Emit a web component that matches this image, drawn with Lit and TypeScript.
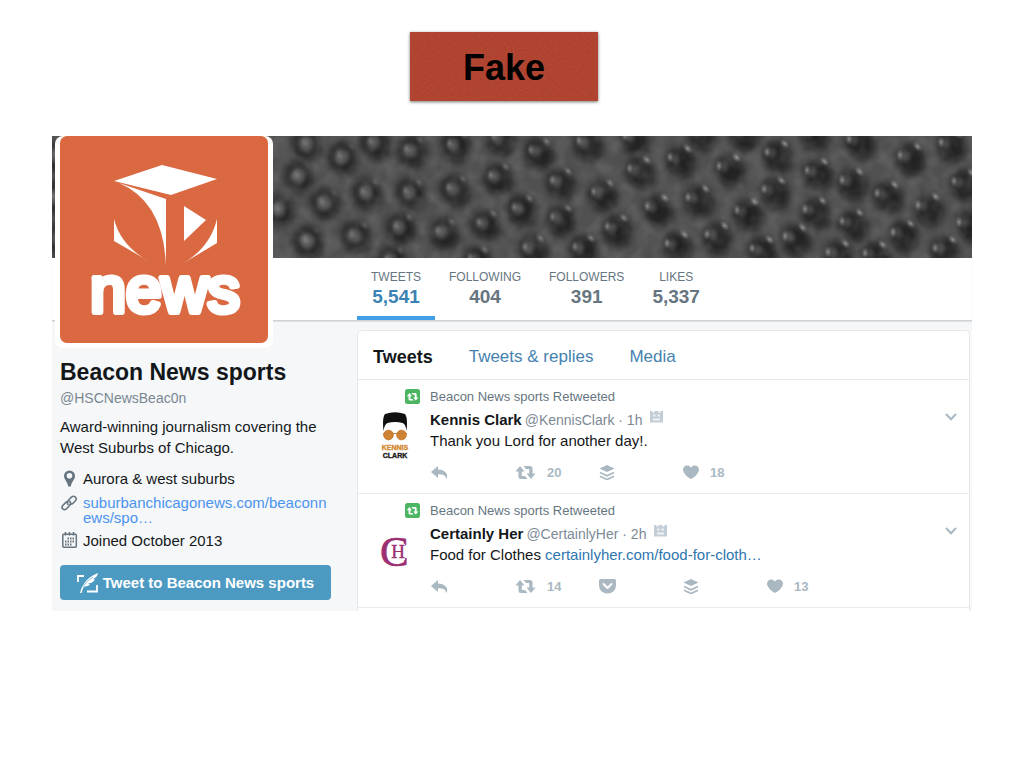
import { LitElement, html, svg, css } from "lit";
import { customElement, property } from "lit/decorators.js";

type ActionKind = "reply" | "retweet" | "pocket" | "buffer" | "like";

interface Tweet {
  by: string;
  name: string;
  handle: string;
  age: string;
  text: string;
  link?: string;
  avatar: "kennis" | "certainly";
  actions: { kind: ActionKind; count?: number }[];
}

const tweets: Tweet[] = [
  {
    by: "Beacon News sports Retweeted",
    name: "Kennis Clark",
    handle: "@KennisClark",
    age: "1h",
    text: "Thank you Lord for another day!.",
    avatar: "kennis",
    actions: [
      { kind: "reply" },
      { kind: "retweet", count: 20 },
      { kind: "buffer" },
      { kind: "like", count: 18 },
    ],
  },
  {
    by: "Beacon News sports Retweeted",
    name: "Certainly Her",
    handle: "@CertainlyHer",
    age: "2h",
    text: "Food for Clothes ",
    link: "certainlyher.com/food-for-cloth…",
    avatar: "certainly",
    actions: [
      { kind: "reply" },
      { kind: "retweet", count: 14 },
      { kind: "pocket" },
      { kind: "buffer" },
      { kind: "like", count: 13 },
    ],
  },
];

const stats = [
  { label: "TWEETS", value: "5,541", active: true },
  { label: "FOLLOWING", value: "404", active: false },
  { label: "FOLLOWERS", value: "391", active: false },
  { label: "LIKES", value: "5,337", active: false },
];

// Studs of the rubber texture: centre x, centre y.
const studs: [number, number][] = [
  [255, 9], [291, 22], [323, 8], [360, 16], [404, 11], [449, 4], [487, 18], [536, 9],
  [247, 41], [273, 68], [315, 58], [359, 58], [403, 55], [446, 43], [509, 48], [551, 60],
  [227, 74], [256, 106], [304, 101], [349, 93], [392, 98], [434, 90], [470, 75], [509, 85],
  [565, 95], [481, 115], [532, 115], [583, 4], [588, 37], [629, 26], [650, 0], [678, 35],
  [693, 0], [726, 21], [763, 0], [766, 39], [808, 8], [801, 49], [859, 24], [900, 11],
  [913, 50], [606, 75], [647, 66], [696, 79], [723, 58], [764, 78], [801, 90], [836, 62],
  [877, 74], [918, 91], [626, 112], [666, 103], [711, 117], [744, 105],
  [787, 121], [852, 101], [894, 117], [824, 122], [6, 20], [3, 62], [8, 104], [340, 126], [425, 126],
];

const retweetPath =
  "M5 1 0.5 6.5H3.5V11.5Q3.5 14 6 14H12.5L10 11H6.8V6.5H9.5ZM16 14 20.5 8.500H17.500V3.500Q17.500 1 15 1H8.500L11 4H14.200V8.500H11.500Z";

const actionIcons = {
  reply: { label: "Reply", w: 17, art: svg`<path d="M7 1 0 7 7 13V9.300C11.500 9 14.500 10.300 15.500 14 17.800 9 14 4.700 7 4.600Z"/>` },
  retweet: { label: "Retweet", w: 21, art: svg`<path d=${retweetPath}/>` },
  pocket: {
    label: "Pocket",
    w: 17,
    art: svg`<path d="M1.500 0H15.500Q17 0 17 1.500V6.500A8.500 8 0 0 1 0 6.500V1.500Q0 0 1.500 0Z"/><path d="M4.500 5 8.500 9 12.500 5" fill="none" stroke="#fff" stroke-width="2" stroke-linecap="round" stroke-linejoin="round"/>`,
  },
  buffer: {
    label: "Buffer",
    w: 16,
    art: svg`<path d="M8 0 15.500 3.500 8 7 0.500 3.500Z"/><path d="M1 7.500 8 10.700 15 7.500M1 11.300 8 14.500 15 11.300" fill="none" stroke="currentColor" stroke-width="1.700"/>`,
  },
  like: { label: "Like", w: 16, art: svg`<path d="M8 14C5 12.500 0 8.500 0 4.500 0 .4 5.500-1.200 8 2.500 10.500-1.200 16 .4 16 4.500 16 8.500 11 12.500 8 14Z"/>` },
};

@customElement("rubber-banner")
export class RubberBanner extends LitElement {
  static styles = css`
    :host { display: block; background: #474747; }
    .art { display: block; width: 100%; height: 122px; }
  `;
  render() {
    return html`
      <svg class="art" viewBox="0 0 920 122" preserveAspectRatio="xMidYMid slice" aria-hidden="true">
        <defs>
          <radialGradient id="pit">
            <stop offset="0" stop-color="#202020"/>
            <stop offset=".4" stop-color="#252525"/>
            <stop offset=".65" stop-color="#333" stop-opacity=".85"/>
            <stop offset="1" stop-color="#484848" stop-opacity="0"/>
          </radialGradient>
          <radialGradient id="core">
            <stop offset="0" stop-color="#747474"/>
            <stop offset=".5" stop-color="#5c5c5c" stop-opacity=".8"/>
            <stop offset="1" stop-color="#444" stop-opacity="0"/>
          </radialGradient>
          <radialGradient id="glint">
            <stop offset="0" stop-color="#ccc"/>
            <stop offset="1" stop-color="#888" stop-opacity="0"/>
          </radialGradient>
          <filter id="grain" x="0" y="0" width="100%" height="100%">
            <feTurbulence type="fractalNoise" baseFrequency=".07" numOctaves="2" seed="4"/>
            <feColorMatrix values="0 0 0 0 .5  0 0 0 0 .5  0 0 0 0 .5  .9 0 0 0 -.32"/>
          </filter>
        </defs>
        <rect width="920" height="122" fill="#505050"/>
        ${studs.map(
          ([x, y]) => svg`<ellipse cx=${x} cy=${y} rx="21" ry="24" fill="url(#pit)" transform="rotate(-30 ${x} ${y})"/>`,
        )}
        ${studs.map(([x, y]) => {
          const t = Math.min(1, Math.max(0, (x - 240) / 380));
          return svg`
            <ellipse cx=${x - 1 - 5 * t} cy=${y - 1 - 3 * t} rx=${11 - 4 * t} ry=${12 - 4 * t} fill="url(#core)" opacity=${0.95 - 0.5 * t}/>
            <ellipse cx=${x - 3 - 8 * t} cy=${y - 3 - 2 * t} rx="4" ry="6" fill="url(#glint)" opacity=${0.15 + 0.4 * t}/>
            <ellipse cx=${x + 9 - 3 * t} cy=${y - 12} rx="6" ry="4" fill="url(#glint)" transform="rotate(45 ${x + 8} ${y - 12})" opacity=${0.1 + 0.5 * t}/>`;
        })}
        <rect width="920" height="122" filter="url(#grain)" opacity=".35"/>
      </svg>
    `;
  }
}

@customElement("tweet-item")
export class TweetItem extends LitElement {
  @property({ attribute: false }) tweet!: Tweet;

  static styles = css`
    :host { display: block; border-bottom: 1px solid #e6ecf0; }
    a { color: inherit; text-decoration: none; }
    button { border: 0; padding: 0; background: none; font: inherit; color: inherit; cursor: pointer; }
    .tweet { display: grid; grid-template-columns: 48px minmax(0, 1fr); column-gap: 11px; padding: 9px 12px 11px 13px; }
    .context { grid-column: 1 / -1; display: flex; align-items: center; gap: 9px; height: 16px; padding-left: 34px; font-size: 13px; line-height: 16px; color: #66757f; }
    .badge { width: 16px; height: 16px; }
    .avatar { width: 48px; height: 50px; margin-top: 6px; }
    .body { padding-top: 4px; }
    .head { display: flex; align-items: center; height: 21px; font-size: 14px; color: #7c8a95; white-space: nowrap; }
    .name { font-size: 15px; font-weight: bold; color: #14171a; margin-right: 3px; }
    .robot { width: 13px; height: 13px; margin: 0 0 7px 8px; }
    .caret { display: flex; margin: 0 0 6px auto; color: #aab8c2; }
    .text { margin: 0; font-size: 15px; line-height: 21px; color: #14171a; }
    .link { color: #2f76ae; }
    .actions { display: grid; grid-auto-flow: column; grid-auto-columns: 84px; justify-content: start; height: 20px; margin-top: 11px; padding-left: 1px; }
    .action { display: flex; align-items: center; gap: 11px; color: #aab8c2; font-size: 13px; font-weight: bold; }
  `;

  private avatar() {
    if (this.tweet.avatar === "kennis") {
      return html`<svg class="avatar" viewBox="0 0 48 50" role="img" aria-label="Kennis Clark">
        <path d="M12.500 20Q11 7 14 3Q24-.5 34 3Q37 7 35.500 20Q34.500 12.500 31.500 12Q24 10 16.500 12Q13.500 13 12.500 20Z" fill="#111"/>
        <g fill="#cf8431" stroke="#c57c35"><circle cx="17.500" cy="24" r="4.800"/><circle cx="30.500" cy="24" r="4.800"/><path d="M12 22.500H36" fill="none"/></g>
        <g font-family="Liberation Sans, Arial, sans-serif" font-weight="bold" font-size="7" text-anchor="middle">
          <text x="24" y="39" fill="#d58b36" stroke="#d58b36" stroke-width=".4">KENNIS</text>
          <text x="24" y="47" fill="#222" stroke="#222" stroke-width=".4">CLARK</text>
        </g>
      </svg>`;
    }
    return html`<svg class="avatar" viewBox="0 0 48 50" role="img" aria-label="Certainly Her">
      <g font-family="Liberation Serif, serif" fill="#9c2f72">
        <text x="9" y="41" font-size="43" stroke="#9c2f72" stroke-width=".6">C</text>
        <rect x="19" y="19" width="15" height="16" fill="#fff"/>
        <text x="27" y="33" font-size="19" text-anchor="middle" stroke="#9c2f72" stroke-width=".4">H</text>
      </g>
    </svg>`;
  }

  render() {
    const t = this.tweet;
    return html`
      <article class="tweet">
        <div class="context">
          <svg class="badge" viewBox="0 0 16 16" aria-hidden="true">
            <rect width="15" height="15" rx="2.500" fill="#4cb562"/>
            <g transform="translate(1.500 3.500) scale(.58)" fill="#fff"><path d=${retweetPath}/></g>
          </svg>
          <span>${t.by}</span>
        </div>
        ${this.avatar()}
        <div class="body">
          <div class="head">
            <a href="#profile" class="name">${t.name}</a><span>${t.handle} · ${t.age}</span>
            <svg class="robot" viewBox="0 0 13 13" aria-hidden="true">
              <path d="M0 1H2.500V2.500H4.500V1H8.500V2.500H10.500V1H13V12.500H0Z" fill="#c3cdd6"/>
              <path d="M3 4.500H5.500V6.500H3ZM7.500 4.500H10V6.500H7.500ZM3 8.500H10V10.500H3Z" fill="#fff" opacity=".75"/>
            </svg>
            <button class="caret" aria-label="More">
              <svg width="12" height="8" viewBox="0 0 12 8" aria-hidden="true"><path d="M1 1 6 6.200 11 1" fill="none" stroke="currentColor" stroke-width="2"/></svg>
            </button>
          </div>
          <p class="text">${t.text}${t.link ? html`<a class="link" href="#link">${t.link}</a>` : ""}</p>
          <div class="actions">
            ${t.actions.map((a) => {
              const icon = actionIcons[a.kind];
              return html`<button class="action" aria-label=${icon.label}>
                <svg width=${icon.w} height="15" viewBox="0 0 ${icon.w} 15" fill="currentColor" aria-hidden="true">${icon.art}</svg>
                ${a.count ?? ""}
              </button>`;
            })}
          </div>
        </div>
      </article>
    `;
  }
}

@customElement("app-root")
export class AppRoot extends LitElement {
  static styles = css`
    :host { display: block; min-height: 100vh; background: #fff; font-family: "Liberation Sans", Arial, sans-serif; color: #14171a; }
    a { color: inherit; text-decoration: none; }
    .stage { display: flex; justify-content: center; padding: 32px 68px 35px 52px; }
    .stamp { display: grid; place-items: center; width: 188px; height: 69px; overflow: hidden; background: #ae412e; box-shadow: 0 1px 3px rgba(0, 0, 0, 0.55); }
    .stamp > * { grid-area: 1 / 1; }
    .weave { width: 188px; height: 69px; opacity: 0.15; }
    .title { z-index: 1; margin: 0; padding-top: 2px; font-size: 36px; line-height: 40px; font-weight: bold; color: #000; }
    .profile { position: relative; margin: 0 52px; background: #f5f7f9; }
    .logo { position: absolute; top: 0; left: 3px; padding: 0 5px 5px; background: #fff; border-radius: 8px; }
    .logo-art { display: block; width: 208px; height: 207px; }
    .stats { display: flex; height: 62px; padding-left: 305px; background: #fff; border-bottom: 1px solid #cbd2d7; box-shadow: 0 1px 1px rgba(0, 0, 0, 0.08); }
    .stat { box-sizing: border-box; padding: 12px 14px 0; text-align: center; color: #66757f; border-bottom: 4px solid transparent; }
    .stat.active { border-color: #42a0e6; }
    .label { display: block; font-size: 12px; line-height: 15px; }
    .value { display: block; font-size: 19px; line-height: 24px; font-weight: bold; }
    .active .value { color: #3b83b3; }
    .columns { display: grid; grid-template-columns: 305px minmax(0, 1fr); }
    .side { padding: 37px 26px 11px 8px; font-size: 15px; }
    .name { margin: 0; font-size: 23px; line-height: 28px; font-weight: bold; }
    .handle { margin: 2px 0 0; font-size: 14px; line-height: 20px; color: #7a8791; }
    .bio { margin: 8px 0 11px; line-height: 21px; }
    .facts { display: grid; grid-template-columns: 18px minmax(0, 1fr); column-gap: 5px; row-gap: 6px; line-height: 20px; }
    .fact-icon { width: 18px; height: 18px; color: #66757f; }
    .site { color: #4b94ee; line-height: 15px; word-break: break-all; }
    .compose { display: flex; align-items: center; justify-content: center; gap: 4px; width: 100%; height: 35px; margin-top: 14px; padding: 0; border: 0; border-radius: 4px; background: #4c9ac2; color: #fff; font: bold 15px "Liberation Sans", Arial, sans-serif; white-space: nowrap; cursor: pointer; }
    .timeline { margin: 9px 2px 0 0; background: #fff; border: 1px solid #e3e9ed; border-bottom: 0; border-radius: 5px 5px 0 0; }
    .tabs { display: flex; align-items: center; gap: 36px; height: 49px; padding: 4px 15px 0; box-sizing: border-box; border-bottom: 1px solid #e3e9ed; font-size: 17px; color: #4682b0; }
    .tab.active { font-size: 18px; font-weight: bold; color: #14171a; }
  `;

  render() {
    return html`
      <header class="stage">
        <div class="stamp">
          <svg class="weave" aria-hidden="true">
            <filter id="cloth" x="0" y="0" width="100%" height="100%">
              <feTurbulence type="fractalNoise" baseFrequency=".35 .5" numOctaves="2" seed="7"/>
              <feColorMatrix values="0 0 0 0 .85  0 0 0 0 .35  0 0 0 0 .25  .9 0 0 0 -.2"/>
            </filter>
            <rect width="188" height="69" filter="url(#cloth)"/>
          </svg>
          <h1 class="title">Fake</h1>
        </div>
      </header>
      <main class="profile">
        <rubber-banner></rubber-banner>
        <nav class="stats" aria-label="Profile statistics">
          ${stats.map(
            (s) => html`<a href="#stats" class=${s.active ? "stat active" : "stat"}>
              <span class="label">${s.label}</span><span class="value">${s.value}</span>
            </a>`,
          )}
        </nav>
        <div class="logo">
          <svg class="logo-art" viewBox="0 0 208 207" role="img" aria-label="Beacon News">
            <rect width="208" height="207" rx="7" fill="#da6840"/>
            <g fill="#fff">
              <path d="M54 45 102 29 157 43 111 59Z"/>
              <path d="M59 47 106 63V131Q104 66 59 47Z"/>
              <path d="M124 70 146 84 124 105Z"/>
              <path d="M54 83Q61 111 92 127L54 105Z"/>
              <path d="M157 83Q150 112 122 128L157 107Z"/>
            </g>
            <text x="105" y="176" text-anchor="middle" font-family="Liberation Sans, Arial, sans-serif" font-size="64" fill="#fff" stroke="#fff" stroke-width="6" stroke-linejoin="round">news</text>
          </svg>
        </div>
        <div class="columns">
          <aside class="side">
            <h2 class="name">Beacon News sports</h2>
            <p class="handle">@HSCNewsBeac0n</p>
            <p class="bio">Award-winning journalism covering the West Suburbs of Chicago.</p>
            <div class="facts">
              <svg class="fact-icon" viewBox="0 0 18 18" aria-hidden="true">
                <path fill="currentColor" fill-rule="evenodd" d="M9.500 1.500A5.500 5.500 0 0 1 15 7C15 10.500 11.500 12.500 10.800 17.500H8.200C7.500 12.500 4 10.500 4 7A5.500 5.500 0 0 1 9.500 1.500ZM9.500 4A2.800 2.800 0 1 0 9.500 9.600 2.800 2.800 0 1 0 9.500 4Z"/>
              </svg>
              <span>Aurora &amp; west suburbs</span>
              <svg class="fact-icon" viewBox="0 0 18 18" aria-hidden="true">
                <g fill="none" stroke="currentColor" stroke-width="1.600" stroke-linecap="round">
                  <path d="M8 9.500C6.500 7.500 8 5.500 9.500 4L11.500 2.200C14-.2 18 3 15.200 6L12.500 8.700C11.800 9.300 11 9.400 10.300 9.200"/>
                  <path d="M9.800 6.200C11.500 8 10.500 9.700 9 11.200L6.500 13.700C4 16.200.5 13.200 3 10.300L5.600 7.600C6.200 7 7 6.800 7.600 7"/>
                </g>
              </svg>
              <a class="site" href="#site">suburbanchicagonews.com/beaconnews/spo…</a>
              <svg class="fact-icon" viewBox="0 0 18 18" aria-hidden="true">
                <rect x="2.800" y="3.300" width="13.500" height="13" rx="1" fill="none" stroke="currentColor" stroke-width="1.500"/>
                <path d="M5.500 1V4.500M9.500 1V4.500M13.500 1V4.500" stroke="currentColor" stroke-width="1.600"/>
                <path d="M7.500 7.500H14M5 10.500H14M5 13.500H12" stroke="currentColor" stroke-width="1.800" stroke-dasharray="1.500 1"/>
              </svg>
              <span>Joined October 2013</span>
            </div>
            <button class="compose">
              <svg width="22" height="22" viewBox="0 0 22 22" aria-hidden="true">
                <path d="M1 10V4H7M10 19.500H20V13" fill="none" stroke="#fff" stroke-width="1.800"/>
                <path d="M3 21C5 13 10 5 21 1 20.500 4 19 6 16 7L18 7.500C16 10.500 13.500 11.500 11 11.500L13 12.500C10.500 14.500 8 14.500 7 14.500Q5.500 17 4.500 21Z" fill="#fff"/>
                <path d="M6 14.500Q10 8.500 16 5" fill="none" stroke="#4c9ac2" stroke-width=".6"/>
              </svg>
              Tweet to Beacon News sports
            </button>
          </aside>
          <section class="timeline">
            <nav class="tabs" aria-label="Timeline">
              <a href="#tweets" class="tab active">Tweets</a>
              <a href="#replies" class="tab">Tweets &amp; replies</a>
              <a href="#media" class="tab">Media</a>
            </nav>
            ${tweets.map((t) => html`<tweet-item .tweet=${t}></tweet-item>`)}
          </section>
        </div>
      </main>
    `;
  }
}
